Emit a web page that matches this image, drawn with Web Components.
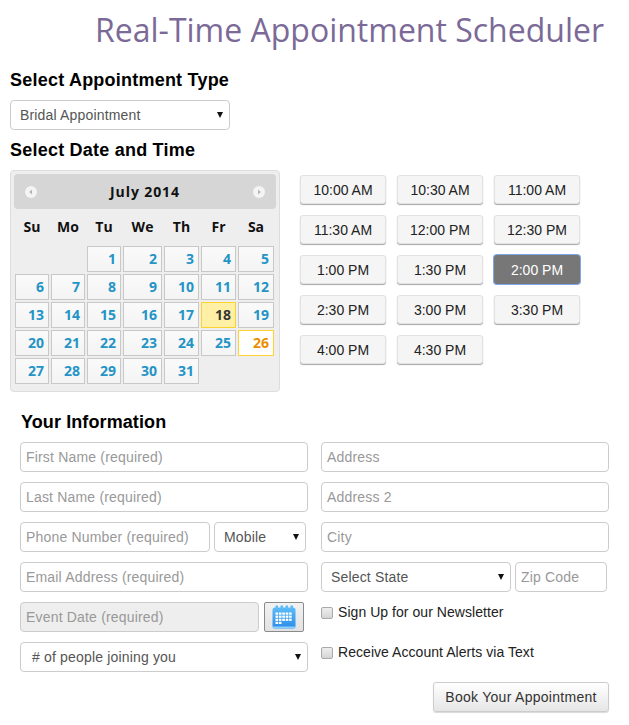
<!DOCTYPE html>
<html lang="en">
<head>
<meta charset="utf-8">
<title>Real-Time Appointment Scheduler</title>
<style>
    html, body {
        margin: 0;
        background: #ffffff;
        font-family: "Liberation Sans", Arial, sans-serif;
    }
</style>
</head>
<body>

<scheduler-page>
    <page-title>Real-Time Appointment Scheduler</page-title>

    <section-heading>Select Appointment Type</section-heading>
    <select-box style="width: 220px">Bridal Appointment</select-box>

    <section-heading slot-size="date">Select Date and Time</section-heading>
    <div style="display: flex; gap: 20px">
        <date-picker month="July 2014" first-day="2" days="31" selected="18" today="26"></date-picker>
        <time-slots selected="2:00 PM"></time-slots>
    </div>

    <info-form>
        <section-heading slot-size="info">Your Information</section-heading>
        <div style="display: grid; grid-template-columns: 288px 288px; column-gap: 13px">
            <div style="display: flex; flex-direction: column; gap: 10px">
                <text-field>First Name (required)</text-field>
                <text-field>Last Name (required)</text-field>
                <div style="display: flex; gap: 4px">
                    <text-field style="width: 190px">Phone Number (required)</text-field>
                    <select-box style="width: 92px">Mobile</select-box>
                </div>
                <text-field>Email Address (required)</text-field>
                <div style="display: flex; gap: 5px">
                    <text-field disabled style="width: 239px">Event Date (required)</text-field>
                    <calendar-button></calendar-button>
                </div>
                <select-box indent="11">&#35; of people joining you</select-box>
            </div>
            <div style="display: flex; flex-direction: column; gap: 10px">
                <text-field>Address</text-field>
                <text-field>Address 2</text-field>
                <text-field>City</text-field>
                <div style="display: flex; gap: 4px">
                    <select-box style="width: 190px">Select State</select-box>
                    <text-field style="width: 92px">Zip Code</text-field>
                </div>
                <check-row>Sign Up for our Newsletter</check-row>
                <check-row>Receive Account Alerts via Text</check-row>
            </div>
        </div>
        <book-button>Book Your Appointment</book-button>
    </info-form>
</scheduler-page>

<script>
class SchedulerPage extends HTMLElement {
    constructor() {
        super();
        this.attachShadow({mode: 'open'});
        this.shadowRoot.innerHTML = `
            <style>
                :host {
                    display: block;
                    width: 629px;
                    height: 725px;
                    box-sizing: border-box;
                    padding-left: 10px;
                    overflow: hidden;
                }
            </style>
            <slot></slot>
        `;
    }
}

class PageTitle extends HTMLElement {
    constructor() {
        super();
        this.attachShadow({mode: 'open'});
        this.shadowRoot.innerHTML = `
            <style>
                :host {
                    display: block;
                    height: 62px;
                    line-height: 60px;
                    margin-left: -10px;
                    padding-right: 25px;
                    text-align: right;
                    font-family: "Open Sans", sans-serif;
                    font-size: 32px;
                    font-weight: 400;
                    color: #7b6a97;
                    white-space: nowrap;
                }
            </style>
            <slot></slot>
        `;
    }
}

class SectionHeading extends HTMLElement {
    constructor() {
        super();
        this.attachShadow({mode: 'open'});
        this.shadowRoot.innerHTML = `
            <style>
                :host {
                    display: block;
                    height: 36px;
                    line-height: 36px;
                    margin-bottom: 2px;
                    font-size: 18px;
                    font-weight: bold;
                    letter-spacing: 0.22px;
                    color: #000000;
                }
                :host([slot-size="date"]) {
                    height: 40px;
                    line-height: 40px;
                    margin-bottom: 0;
                }
                :host([slot-size="info"]) {
                    height: 42px;
                    line-height: 44px;
                    margin-bottom: 0;
                    padding-left: 1px;
                    letter-spacing: 0.1px;
                }
            </style>
            <slot></slot>
        `;
    }
}

class SelectBox extends HTMLElement {
    constructor() {
        super();
        this.attachShadow({mode: 'open'});
        const indent = this.getAttribute('indent') || '9';
        this.shadowRoot.innerHTML = `
            <style>
                :host {
                    display: flex;
                    align-items: center;
                    justify-content: space-between;
                    box-sizing: border-box;
                    height: 30px;
                    padding: 0 6px 0 ${indent}px;
                    background: #ffffff;
                    border: 1px solid #cccccc;
                    border-radius: 4px;
                    font-size: 14px;
                    letter-spacing: 0.17px;
                    color: #555555;
                    white-space: nowrap;
                }
                svg { display: block; margin-top: -1px; }
            </style>
            <slot></slot>
            <svg width="6" height="6" viewBox="0 0 6 6"><path d="M0 0H6L3 6Z" fill="#111"/></svg>
        `;
    }
}

class DatePicker extends HTMLElement {
    constructor() {
        super();
        this.attachShadow({mode: 'open'});
        this.shadowRoot.innerHTML = `
            <style>
                :host {
                    display: block;
                    box-sizing: border-box;
                    width: 270px;
                    height: 222px;
                    padding: 3px;
                    background: #eeeeee;
                    border: 1px solid #dddddd;
                    border-radius: 4px;
                    font-family: "Open Sans", sans-serif;
                    font-size: 14px;
                    font-weight: 700;
                }
                .head {
                    display: flex;
                    align-items: center;
                    justify-content: space-between;
                    height: 35px;
                    padding: 0 10px;
                    background: #d6d6d6;
                    border-radius: 4px;
                    color: #111111;
                    letter-spacing: 0.9px;
                }
                .head svg { display: block; }
                .grid {
                    display: grid;
                    grid-template-columns: 34px 34px 34px 39px 35px 35px 36px;
                    grid-auto-rows: 26px;
                    gap: 2px;
                    margin-left: 1px;
                }
                .grid.dows { grid-auto-rows: 37px; }
                .dow {
                    line-height: 35px;
                    text-align: center;
                    color: #111111;
                }
                .day {
                    box-sizing: border-box;
                    padding-right: 4px;
                    line-height: 24px;
                    text-align: right;
                    background: linear-gradient(#fafafa, #f4f4f4);
                    border: 1px solid #c8c8c8;
                    color: #2494c6;
                }
                .day.selected {
                    background: #fff0a5;
                    border-color: #fed22f;
                    color: #363636;
                }
                .day.today {
                    background: #ffffff;
                    border-color: #fed22f;
                    color: #eb8f00;
                }
            </style>
            <div class="head">
                <svg width="14" height="14" viewBox="0 0 14 14"><circle cx="7" cy="7" r="6" fill="#f4f4f4"/><path d="M8 4.5V9.5L5.2 7Z" fill="#b5b5b5"/></svg>
                <span class="month"></span>
                <svg width="14" height="14" viewBox="0 0 14 14"><circle cx="7" cy="7" r="6" fill="#f4f4f4"/><path d="M6 4.5V9.5L8.8 7Z" fill="#b5b5b5"/></svg>
            </div>
            <div class="grid dows"></div>
            <div class="grid days"></div>
        `;
    }

    connectedCallback() {
        const root = this.shadowRoot;
        root.querySelector('.month').textContent = this.getAttribute('month');
        const dows = root.querySelector('.dows');
        ['Su', 'Mo', 'Tu', 'We', 'Th', 'Fr', 'Sa'].forEach((name) => {
            const el = document.createElement('div');
            el.className = 'dow';
            el.textContent = name;
            dows.appendChild(el);
        });
        const days = root.querySelector('.days');
        const firstDay = Number(this.getAttribute('first-day'));
        for (let i = 0; i < firstDay; i++) {
            days.appendChild(document.createElement('div'));
        }
        for (let d = 1; d <= Number(this.getAttribute('days')); d++) {
            const el = document.createElement('div');
            el.className = 'day';
            if (String(d) === this.getAttribute('selected')) el.classList.add('selected');
            if (String(d) === this.getAttribute('today')) el.classList.add('today');
            el.textContent = d;
            days.appendChild(el);
        }
    }
}

class TimeSlots extends HTMLElement {
    constructor() {
        super();
        this.attachShadow({mode: 'open'});
        this.shadowRoot.innerHTML = `
            <style>
                :host {
                    display: grid;
                    grid-template-columns: repeat(3, 86px);
                    grid-auto-rows: 29px;
                    column-gap: 11px;
                    row-gap: 11px;
                    align-content: start;
                    padding-top: 5px;
                }
                button {
                    box-sizing: border-box;
                    margin: 0;
                    padding: 0;
                    background: #f5f5f5;
                    border: 1px solid #e2e2e2;
                    border-radius: 3px;
                    box-shadow: 0 1px 1px rgba(0, 0, 0, 0.35);
                    font-family: "Liberation Sans", Arial, sans-serif;
                    font-size: 14px;
                    color: #222222;
                }
                button.on {
                    background: #777777;
                    border-color: #777777;
                    box-shadow: 0 0 0 1px #7fa6e6;
                    color: #ffffff;
                }
            </style>
        `;
        const times = ['10:00 AM', '10:30 AM', '11:00 AM', '11:30 AM', '12:00 PM', '12:30 PM', '1:00 PM',
            '1:30 PM', '2:00 PM', '2:30 PM', '3:00 PM', '3:30 PM', '4:00 PM', '4:30 PM'];
        times.forEach((time) => {
            const btn = document.createElement('button');
            btn.type = 'button';
            btn.textContent = time;
            if (time === this.getAttribute('selected')) btn.className = 'on';
            this.shadowRoot.appendChild(btn);
        });
    }
}

class InfoForm extends HTMLElement {
    constructor() {
        super();
        this.attachShadow({mode: 'open'});
        this.shadowRoot.innerHTML = `
            <style>
                :host {
                    display: block;
                    padding-top: 8px;
                    padding-left: 10px;
                }
            </style>
            <slot></slot>
        `;
    }
}

class TextField extends HTMLElement {
    constructor() {
        super();
        this.attachShadow({mode: 'open'});
        this.shadowRoot.innerHTML = `
            <style>
                :host {
                    display: flex;
                    align-items: center;
                    box-sizing: border-box;
                    height: 30px;
                    padding: 0 5px;
                    background: #ffffff;
                    border: 1px solid #cccccc;
                    border-radius: 4px;
                    font-size: 14px;
                    letter-spacing: 0.18px;
                    color: #999999;
                    white-space: nowrap;
                }
                :host([disabled]) {
                    background: #eeeeee;
                }
            </style>
            <slot></slot>
        `;
    }
}

class CalendarButton extends HTMLElement {
    constructor() {
        super();
        this.attachShadow({mode: 'open'});
        let cells = '';
        for (let r = 0; r < 4; r++) {
            for (let c = 0; c < 5; c++) {
                if (r === 3 && c > 1) continue;
                cells += `<rect x="${3.5 + c * 3.4}" y="${7.5 + r * 3.1}" width="2.6" height="2.2" fill="#fff"/>`;
            }
        }
        this.shadowRoot.innerHTML = `
            <style>
                :host {
                    display: flex;
                    align-items: center;
                    justify-content: center;
                    box-sizing: border-box;
                    width: 40px;
                    height: 30px;
                    background: linear-gradient(#f2f2f2, #e2e2e2);
                    border: 1px solid #8a8a8a;
                    border-radius: 2px;
                }
                svg { display: block; }
            </style>
            <svg width="24" height="24" viewBox="0 0 24 24">
                <defs>
                    <linearGradient id="cal" x1="0" y1="0" x2="0" y2="1">
                        <stop offset="0" stop-color="#5cbcf8"/>
                        <stop offset="1" stop-color="#2a8cea"/>
                    </linearGradient>
                </defs>
                <rect x="0.5" y="2.5" width="23" height="21" rx="2.5" fill="url(#cal)"/>
                <path d="M3.5 0.5h2.5v3H3.5zM8.5 0.5h2.5v3H8.5zM13.5 0.5h2.5v3h-2.5zM18.5 0.5h2.5v3h-2.5z" fill="#5cbcf8"/>
                <rect x="0.5" y="21.5" width="23" height="2" rx="1" fill="#8fd0f8"/>
                ${cells}
            </svg>
        `;
    }
}

class CheckRow extends HTMLElement {
    constructor() {
        super();
        this.attachShadow({mode: 'open'});
        this.shadowRoot.innerHTML = `
            <style>
                :host {
                    display: flex;
                    align-items: center;
                    box-sizing: border-box;
                    height: 30px;
                    padding-bottom: 8px;
                    font-size: 14px;
                    letter-spacing: 0.05px;
                    color: #222222;
                    white-space: nowrap;
                }
                input {
                    appearance: none;
                    box-sizing: border-box;
                    width: 12px;
                    height: 12px;
                    margin: 0 5px 0 0;
                    background: linear-gradient(#eeeeee, #d4d4d4);
                    border: 1px solid #aaaaaa;
                    border-radius: 2px;
                }
                span { margin-top: -3px; }
            </style>
            <input type="checkbox">
            <span><slot></slot></span>
        `;
    }
}

class BookButton extends HTMLElement {
    constructor() {
        super();
        this.attachShadow({mode: 'open'});
        this.shadowRoot.innerHTML = `
            <style>
                :host {
                    display: flex;
                    justify-content: flex-end;
                    width: 589px;
                    margin-top: 10px;
                }
                button {
                    box-sizing: border-box;
                    width: 176px;
                    height: 30px;
                    margin: 0;
                    padding: 0;
                    background: linear-gradient(#ffffff, #e6e6e6);
                    border: 1px solid #cccccc;
                    border-radius: 3px;
                    box-shadow: 0 1px 1px rgba(0, 0, 0, 0.15);
                    font-family: "Liberation Sans", Arial, sans-serif;
                    font-size: 14px;
                    letter-spacing: 0.28px;
                    color: #333333;
                }
            </style>
            <button type="button"><slot></slot></button>
        `;
    }
}

customElements.define('scheduler-page', SchedulerPage);
customElements.define('page-title', PageTitle);
customElements.define('section-heading', SectionHeading);
customElements.define('select-box', SelectBox);
customElements.define('date-picker', DatePicker);
customElements.define('time-slots', TimeSlots);
customElements.define('info-form', InfoForm);
customElements.define('text-field', TextField);
customElements.define('calendar-button', CalendarButton);
customElements.define('check-row', CheckRow);
customElements.define('book-button', BookButton);
</script>
</body>
</html>
